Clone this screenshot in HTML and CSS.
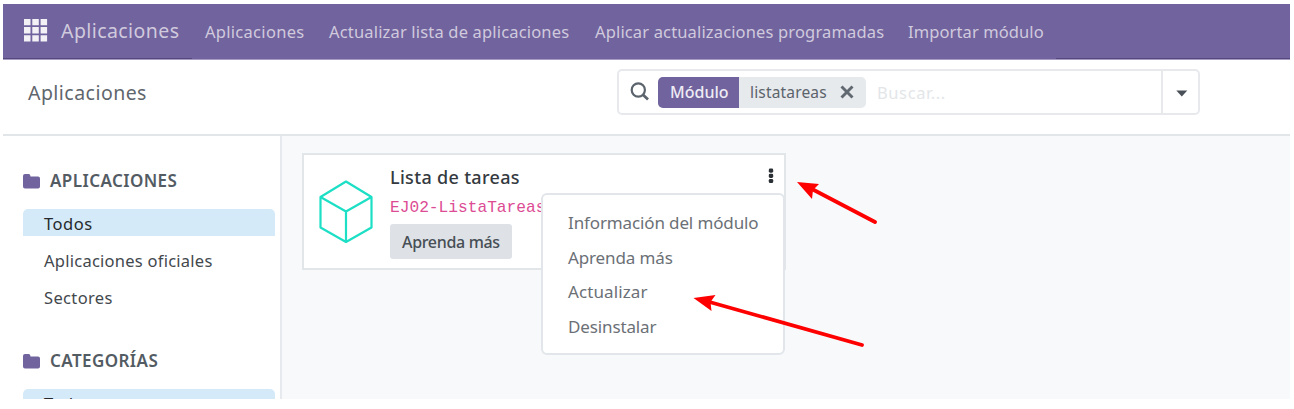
FILE: index.html
```
<!DOCTYPE html>
<html lang="es">
<head>
<meta charset="utf-8">
<title>Aplicaciones</title>
<link rel="stylesheet" href="styles.css">
</head>
<body>
<div class="app">
  <nav class="navbar">
    <svg class="grid-icon" width="24" height="23" viewBox="0 0 24 23" fill="#f3f1f6">
      <path d="M0 0h6.5v6.3H0zM8.3 0h6.5v6.3H8.3zM16.6 0h6.5v6.3h-6.5zM0 8.1h6.5v6.3H0zM8.3 8.1h6.5v6.3H8.3zM16.6 8.1h6.5v6.3h-6.5zM0 16.2h6.5v6.3H0zM8.3 16.2h6.5v6.3H8.3zM16.6 16.2h6.5v6.3h-6.5z"/>
    </svg>
    <span class="brand">Aplicaciones</span>
    <span class="nav-item n1">Aplicaciones</span>
    <span class="nav-item n2">Actualizar lista de aplicaciones</span>
    <span class="nav-item n3">Aplicar actualizaciones programadas</span>
    <span class="nav-item n4">Importar módulo</span>
    <i class="edge edge-left"></i><i class="edge edge-right"></i>
  </nav>
  <header class="control">
    <span class="crumb">Aplicaciones</span>
    <div class="search">
      <svg class="lens" width="20" height="20" viewBox="0 0 20 20" fill="none" stroke="#5b636c" stroke-width="2.2"><circle cx="8.3" cy="8" r="6.6"/><path d="M13 12.7l5 4.8" stroke-width="2.7"/></svg>
      <div class="facet"><span class="facet-name">Módulo</span><span class="facet-value">listatareas</span>
        <svg width="14" height="14" viewBox="0 0 14 14" stroke="#606970" stroke-width="2.9"><path d="M1.5 1.5l11 11M12.5 1.5l-11 11"/></svg>
      </div>
      <span class="placeholder">Buscar...</span>
      <div class="toggle"><svg width="12" height="7" viewBox="0 0 12 7" fill="#495057"><path d="M.3.4h11L5.8 6.4z"/></svg></div>
    </div>
  </header>
  <div class="content">
    <aside class="sidebar">
      <div class="heading"><svg width="17" height="15" viewBox="0 0 17 15" fill="#71639e"><path d="M0 2Q0 0 2 0h3.6q1.8 0 1.8 2v.6H15q2 0 2 2v8q0 2-2 2H2q-2 0-2-2z"/></svg><span class="h1">APLICACIONES</span></div>
      <div class="item active"><span class="todos">Todos</span></div>
      <div class="item"><span class="official">Aplicaciones oficiales</span></div>
      <div class="item"><span class="sectors">Sectores</span></div>
      <div class="heading second"><svg width="17" height="15" viewBox="0 0 17 15" fill="#71639e"><path d="M0 2Q0 0 2 0h3.6q1.8 0 1.8 2v.6H15q2 0 2 2v8q0 2-2 2H2q-2 0-2-2z"/></svg><span class="h2">CATEGORÍAS</span></div>
      <div class="item active"><span class="todos">Todos</span></div>
    </aside>
    <main class="main">
      <article class="card">
        <svg class="cube" width="54" height="64" viewBox="0 0 54 64" fill="none" stroke="#1cdfc5" stroke-width="2.2" stroke-linejoin="round"><path d="M27 1.5L52.5 17v30.5L27 62 1.5 47.500V17zM1.500 17L27 31.500 52.500 17M27 31.500V62"/></svg>
        <div class="info">
          <span class="title">Lista de tareas</span>
          <code class="tech">EJ02-ListaTareas</code>
          <button class="learn">Aprenda más</button>
        </div>
        <svg class="dots" width="6" height="16" viewBox="0 0 6 16" fill="#2b3035"><rect x=".8" y=".5" width="4.400" height="4.200" rx="1.400"/><rect x=".8" y="5.700" width="4.400" height="4.200" rx="1.400"/><rect x=".8" y="10.900" width="4.400" height="4.200" rx="1.400"/></svg>
        <div class="menu">
          <span class="m1">Información del módulo</span>
          <span class="m2">Aprenda más</span>
          <span class="m3">Actualizar</span>
          <span class="m4">Desinstalar</span>
        </div>
      </article>
    </main>
  </div>
  <svg class="arrows" width="1287" height="395" viewBox="3 4 1287 395" fill="#f00" stroke="#f00" stroke-width="3.800" stroke-linecap="round">
    <path d="M810 188L875 222M706 301L862 345"/>
    <path stroke="none" d="M797 182l22 2-6 6-1 9zM693.500 298l22-3-5 7 1 9z"/>
  </svg>
</div>
</body>
</html>
```
FILE: styles.css
```
* { box-sizing: border-box; }
body { margin: 0; background: #fff; font-family: "Noto Sans", sans-serif; }
.app { position: relative; width: 1287px; height: 395px; margin: 4px 0 0 3px; overflow: hidden; display: flex; flex-direction: column; white-space: nowrap; }
svg { display: block; flex: none; }
.navbar { position: relative; flex: none; height: 56px; background: #71639e; border-bottom: 1px solid #a69cc3; display: flex; align-items: center; padding: 0 0 2px 21px; color: #d0cadd; }
.brand { width: 144px; margin-left: 13px; font-size: 19.5px; letter-spacing: .42px; }
.nav-item { font-size: 16.5px; padding-top: 1px; }
.n1 { width: 124px; letter-spacing: .29px; }
.n2 { width: 266px; letter-spacing: .17px; }
.n3 { width: 313px; letter-spacing: .15px; }
.n4 { letter-spacing: .1px; }
.edge { position: absolute; bottom: 0; height: 1px; background: #54487c; }
.edge-left { left: 0; width: 189px; }
.edge-right { right: 0; width: 234px; }
.control { flex: none; height: 76px; border-bottom: 2px solid #e3e6e9; display: flex; align-items: flex-start; padding: 9px 90px 0 25px; }
.crumb { font-size: 19.5px; line-height: 46px; color: #5f666d; margin-top: 1px; letter-spacing: .46px; }
.search { margin-left: auto; width: 583px; height: 46px; border: 2px solid #e7e9ed; border-radius: 5px; display: flex; align-items: center; padding-left: 11px; }
.facet { margin-left: 8px; width: 208px; height: 31px; border-radius: 5px; background: #e7eaed; display: flex; align-items: center; overflow: hidden; font-size: 16px; line-height: 31px; }
.facet-name { width: 81px; padding-left: 12px; background: #71639e; color: #eeebf4; font-weight: 500; }
.facet-value { width: 101px; padding: 1px 0 0 11px; color: #5b636b; font-size: 15.5px; letter-spacing: .17px; }
.placeholder { margin-left: 11px; color: #e3e6e9; font-size: 16.5px; line-height: 31px; letter-spacing: .6px; }
.toggle { margin-left: auto; width: 37px; height: 42px; border-left: 2px solid #e7e9ed; display: flex; align-items: center; padding: 3px 0 0 13px; }
.content { flex: 1; display: flex; min-height: 0; }
.sidebar { width: 279px; flex: none; border-right: 2px solid #e6e9ed; padding: 31px 5px 0 20px; }
.heading { height: 28px; display: flex; align-items: center; gap: 10px; color: #535b63; font-weight: 600; font-size: 17px; letter-spacing: .42px; margin-bottom: 14px; line-height: 28px; }
.heading.second { margin-top: 37px; }
.item { height: 27px; padding-left: 21px; margin-bottom: 10px; font-size: 16.5px; line-height: 30px; color: #43484d; letter-spacing: .25px; }
.item.active { background: #d4eaf8; border-radius: 5px 5px 0 0; color: #25292d; }
.todos { letter-spacing: .5px; }
.sectors { letter-spacing: .35px; }
.main { flex: 1; background: #f8f9fb; padding: 17px 0 0 20px; }
.card { position: relative; width: 484px; height: 117px; background: #fff; border: 2px solid #e3e6e9; display: flex; padding: 0 10px 0 15px; }
.cube { margin-top: 25px; }
.info { display: flex; flex-direction: column; align-items: flex-start; margin-left: 17px; }
.title { font-size: 18px; line-height: 26px; margin-top: 9px; font-weight: 500; color: #343a40; letter-spacing: .32px; }
.tech { font: 16.2px/22px "Liberation Mono", monospace; color: #dc4c94; margin-top: 7px; }
.learn { width: 122px; height: 35px; margin-top: 5px; padding: 0 0 0 12px; text-align: left; border: 0; border-radius: 3px; background: #dee2e6; color: #474e55; font: 500 16px "Noto Sans", sans-serif; letter-spacing: -.33px; }
.dots { margin: 13px 0 0 auto; }
.menu { position: absolute; left: 237px; top: 38px; width: 244px; height: 162px; background: #fff; border: 2px solid #e2e6ea; border-radius: 6px; display: flex; flex-direction: column; padding: 11px 0 0 25px; color: #6b7076; font-size: 17px; line-height: 34.7px; letter-spacing: -.13px; }
.m3 { letter-spacing: .1px; }
.arrows { position: absolute; left: 0; top: 0; }
```
